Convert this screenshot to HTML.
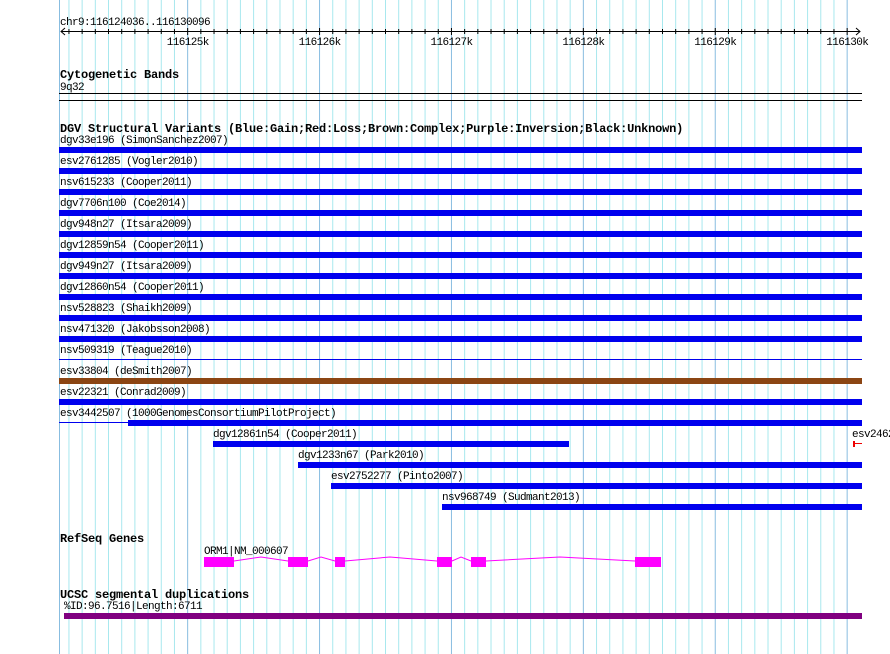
<!DOCTYPE html>
<html><head><meta charset="utf-8"><style>
html,body{margin:0;padding:0;background:#fff;width:890px;height:654px;overflow:hidden}
text{font-family:"Liberation Mono","DejaVu Sans Mono",monospace;font-size:11px;letter-spacing:-0.6px;fill:#000}
.b{font-weight:bold;font-size:12px;letter-spacing:-0.2px}
</style></head><body>
<svg width="890" height="654" xmlns="http://www.w3.org/2000/svg">
<g id="grid"></g>
<line x1="59.5" y1="0" x2="59.5" y2="654" stroke="#88bde0"/>
<text x="60" y="25">chr9:116124036..116130096</text>
<line x1="61" y1="31.5" x2="860" y2="31.5" stroke="#000"/>
<polyline points="65,28 61,31.5 65,35" fill="none" stroke="#000"/>
<polyline points="856,28 860,31.5 856,35" fill="none" stroke="#000"/>
<g id="ticks"></g>
<text x="187.7" y="45" text-anchor="middle">116125k</text>
<text x="319.6" y="45" text-anchor="middle">116126k</text>
<text x="451.5" y="45" text-anchor="middle">116127k</text>
<text x="583.4" y="45" text-anchor="middle">116128k</text>
<text x="715.3" y="45" text-anchor="middle">116129k</text>
<text x="847.2" y="45" text-anchor="middle">116130k</text>
<text class="b" x="60" y="78">Cytogenetic Bands</text>
<text x="60" y="90">9q32</text>
<line x1="59" y1="93.5" x2="862" y2="93.5" stroke="#000"/>
<line x1="59" y1="100.5" x2="862" y2="100.5" stroke="#000"/>
<text class="b" x="60" y="132">DGV Structural Variants (Blue:Gain;Red:Loss;Brown:Complex;Purple:Inversion;Black:Unknown)</text>
<g fill="#0000ee">
<rect x="59" y="147" width="803" height="6"/>
<rect x="59" y="168" width="803" height="6"/>
<rect x="59" y="189" width="803" height="6"/>
<rect x="59" y="210" width="803" height="6"/>
<rect x="59" y="231" width="803" height="6"/>
<rect x="59" y="252" width="803" height="6"/>
<rect x="59" y="273" width="803" height="6"/>
<rect x="59" y="294" width="803" height="6"/>
<rect x="59" y="315" width="803" height="6"/>
<rect x="59" y="336" width="803" height="6"/>
<rect x="59" y="359" width="803" height="1"/>
<rect x="59" y="399" width="803" height="6"/>
<rect x="59" y="422" width="69" height="1"/>
<rect x="128" y="420" width="734" height="6"/>
<rect x="213" y="441" width="356" height="6"/>
<rect x="298" y="462" width="564" height="6"/>
<rect x="331" y="483" width="531" height="6"/>
<rect x="442" y="504" width="420" height="6"/>
</g>
<rect x="59" y="378" width="803" height="6" fill="#8b4513"/>
<text x="60" y="143">dgv33e196 (SimonSanchez2007)</text>
<text x="60" y="164">esv2761285 (Vogler2010)</text>
<text x="60" y="185">nsv615233 (Cooper2011)</text>
<text x="60" y="206">dgv7706n100 (Coe2014)</text>
<text x="60" y="227">dgv948n27 (Itsara2009)</text>
<text x="60" y="248">dgv12859n54 (Cooper2011)</text>
<text x="60" y="269">dgv949n27 (Itsara2009)</text>
<text x="60" y="290">dgv12860n54 (Cooper2011)</text>
<text x="60" y="311">nsv528823 (Shaikh2009)</text>
<text x="60" y="332">nsv471320 (Jakobsson2008)</text>
<text x="60" y="353">nsv509319 (Teague2010)</text>
<text x="60" y="374">esv33804 (deSmith2007)</text>
<text x="60" y="395">esv22321 (Conrad2009)</text>
<text x="60" y="416">esv3442507 (1000GenomesConsortiumPilotProject)</text>
<text x="213" y="437">dgv12861n54 (Cooper2011)</text>
<text x="852" y="437">esv2462</text>
<rect x="853" y="441" width="2" height="6" fill="#ee0000"/>
<rect x="853" y="443" width="9" height="1" fill="#ee0000"/>
<text x="298" y="458">dgv1233n67 (Park2010)</text>
<text x="331" y="479">esv2752277 (Pinto2007)</text>
<text x="442" y="500">nsv968749 (Sudmant2013)</text>
<text class="b" x="60" y="542">RefSeq Genes</text>
<text x="204" y="554">ORM1|NM_000607</text>
<polyline points="234,561 261,557 288,561 308,561 321,557 335,561 345,561 390,557 437,561 452,561 461,557 471,561 486,561 560,557 635,561" fill="none" stroke="#ff00ff"/>
<g fill="#ff00ff">
<rect x="204" y="557" width="30" height="10"/>
<rect x="288" y="557" width="20" height="10"/>
<rect x="335" y="557" width="10" height="10"/>
<rect x="437" y="557" width="15" height="10"/>
<rect x="471" y="557" width="15" height="10"/>
<rect x="635" y="557" width="26" height="10"/>
</g>
<text class="b" x="60" y="598">UCSC segmental duplications</text>
<text x="64" y="609">%ID:96.7516|Length:6711</text>
<rect x="64" y="613" width="798" height="6" fill="#800080"/>
<script>
var g=document.getElementById('grid'),t=document.getElementById('ticks'),ns='http://www.w3.org/2000/svg';
for(var k=0;k<60;k++){var bp=64+100*k;var x=60.5+bp*0.1319;if(x>862)break;var maj=((bp+36)%1000===0);
var l=document.createElementNS(ns,'line');l.setAttribute('x1',x);l.setAttribute('x2',x);l.setAttribute('y1',0);l.setAttribute('y2',654);l.setAttribute('stroke',maj?'#88bde0':'#a8e8ee');g.appendChild(l);
var m=document.createElementNS(ns,'line');m.setAttribute('x1',x);m.setAttribute('x2',x);m.setAttribute('y1',maj?28:29);m.setAttribute('y2',maj?35:34);m.setAttribute('stroke','#000');t.appendChild(m);}
</script>
</svg>
</body></html>
